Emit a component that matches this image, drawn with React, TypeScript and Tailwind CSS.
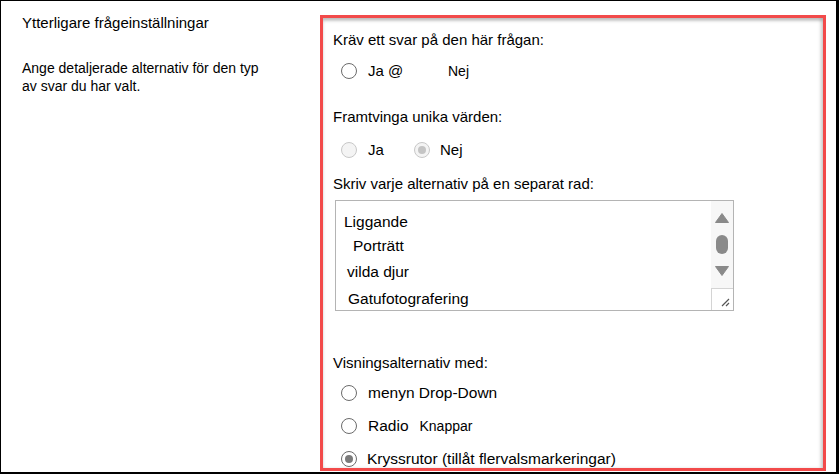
import React from "react";

type RadioProps = {
  checked?: boolean;
  disabled?: boolean;
};

const Radio: React.FC<RadioProps> = ({ checked = false, disabled = false }) => {
  const ring = disabled
    ? "border-[#c8c8c8] bg-[#f4f4f4]"
    : "border-[#6b6b6b] bg-white";
  const dot = disabled ? "bg-[#c4c4c4]" : "bg-[#7a7a7a]";
  return (
    <span
      className={`flex h-[16px] w-[16px] shrink-0 items-center justify-center rounded-full border-[1.5px] ${ring}`}
    >
      {checked && <span className={`h-[8px] w-[8px] rounded-full ${dot}`} />}
    </span>
  );
};

export default function App() {
  return (
    <div
      className="flex h-[474px] w-[839px] border-t border-l border-r-[3px] border-b-2 border-black bg-white text-black"
      style={{ fontFamily: '"Liberation Sans", Arial, sans-serif' }}
    >
      {/* left description column */}
      <div className="w-[319px] shrink-0 pl-[21px] pt-[13px]">
        <div className="text-[15px] leading-[18px]">Ytterligare frågeinställningar</div>
        <p className="mt-[27px] w-[252px] text-[14px] leading-[18px]">
          Ange detaljerade alternativ för den typ av svar du har valt.
        </p>
      </div>

      {/* settings box */}
      <div className="mt-[14px] mb-[1px] w-[506px] shrink-0 border-[3.5px] border-[#f24a4a] shadow-[inset_0_3px_3px_rgba(0,0,0,0.22),inset_-3px_0_3px_rgba(0,0,0,0.12)]">
        <div className="pl-[10px] pt-[13px]">
          <div className="text-[15px] leading-[18px]">Kräv ett svar på den här frågan:</div>
          <div className="mt-[13px] flex items-center pl-[8px] text-[15px] leading-[18px]">
            <Radio />
            <span className="ml-[11px] w-[80px]">Ja @</span>
            <span className="text-[14px]">Nej</span>
          </div>

          <div className="mt-[28px] text-[15px] leading-[18px]">Framtvinga unika värden:</div>
          <div className="mt-[15px] flex items-center pl-[8px] text-[15px] leading-[18px]">
            <Radio disabled />
            <span className="ml-[11px] w-[46px]">Ja</span>
            <Radio disabled checked />
            <span className="ml-[10px]">Nej</span>
          </div>

          <div className="mt-[16px] text-[15px] leading-[18px]">Skriv varje alternativ på en separat rad:</div>
          <div className="ml-[2px] mt-[7px] flex h-[111px] w-[399px] border border-[#b4b4b4]">
            <div className="flex-1 pt-[9px] text-[15.5px]">
              <div className="h-[23px] pl-[8px] leading-[24px]">Liggande</div>
              <div className="h-[25px] pl-[17px] leading-[25px]">Porträtt</div>
              <div className="h-[27px] pl-[11px] leading-[27px]">vilda djur</div>
              <div className="h-[27px] pl-[12px] leading-[27px]">Gatufotografering</div>
            </div>
            <div className="flex w-[22px] flex-col bg-[#f7f7f7]">
              <div className="flex flex-1 flex-col items-center pt-[12px]">
                <svg width="14" height="10" viewBox="0 0 14 10">
                  <path d="M7 0.5 L13.5 9.5 L0.5 9.5 Z" fill="#8a8a8a" strokeLinejoin="round" stroke="#8a8a8a" />
                </svg>
                <div className="mt-[12px] h-[19px] w-[12px] rounded-full bg-[#8a8a8a]" />
                <svg className="mt-[12px]" width="14" height="10" viewBox="0 0 14 10">
                  <path d="M0.5 0.5 L13.5 0.5 L7 9.5 Z" fill="#8a8a8a" strokeLinejoin="round" stroke="#8a8a8a" />
                </svg>
              </div>
              <div className="relative h-[22px] border-l border-t border-[#d4d4d4] bg-white">
                <svg className="absolute bottom-[3px] right-[3px]" width="10" height="10" viewBox="0 0 10 10">
                  <path d="M9 2 L2 9 M9 6 L6 9" stroke="#555" strokeWidth="1.2" />
                </svg>
              </div>
            </div>
          </div>

          <div className="mt-[43px] text-[15px] leading-[18px]">Visningsalternativ med:</div>
          <div className="mt-[12px] flex flex-col gap-[15px] pl-[8px] text-[15.5px] leading-[18px]">
            <div className="flex items-center">
              <Radio />
              <span className="ml-[11px]">menyn Drop-Down</span>
            </div>
            <div className="flex items-center">
              <Radio />
              <span className="ml-[11px]">Radio</span>
              <span className="ml-[11px] text-[14px]">Knappar</span>
            </div>
            <div className="flex items-center">
              <Radio checked />
              <span className="ml-[10px]">Kryssrutor (tillåt flervalsmarkeringar)</span>
            </div>
          </div>
        </div>
      </div>
    </div>
  );
}
